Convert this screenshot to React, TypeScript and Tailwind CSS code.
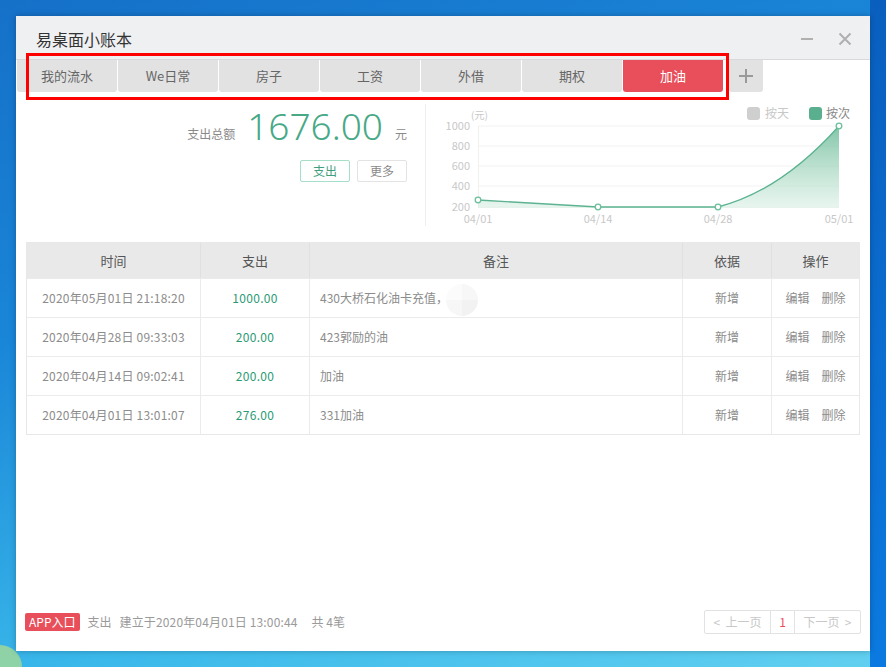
import React from 'react';

const tabs = ['我的流水', 'We日常', '房子', '工资', '外借', '期权', '加油'];

const rows = [
  { time: '2020年05月01日 21:18:20', amount: '1000.00', note: '430大桥石化油卡充值，', basis: '新增' },
  { time: '2020年04月28日 09:33:03', amount: '200.00', note: '423郭励的油', basis: '新增' },
  { time: '2020年04月14日 09:02:41', amount: '200.00', note: '加油', basis: '新增' },
  { time: '2020年04月01日 13:01:07', amount: '276.00', note: '331加油', basis: '新增' },
];

const font = { fontFamily: '"Noto Sans CJK SC", "Noto Sans", sans-serif' };

function Chart() {
  const yTicks = [
    { v: '1000', y: 127 },
    { v: '800', y: 147 },
    { v: '600', y: 167 },
    { v: '400', y: 187 },
    { v: '200', y: 208 },
  ];
  const xTicks = [
    { v: '04/01', x: 478 },
    { v: '04/14', x: 598 },
    { v: '04/28', x: 718 },
    { v: '05/01', x: 839 },
  ];
  const pts = [
    [478, 201],
    [598, 208],
    [718, 208],
    [839, 127],
  ];
  const line = 'M478,201 L598,208 L718,208 C765,196 805,165 839,127';
  return (
    <svg width="430" height="127" viewBox="426 100 430 127" className="block">
      <defs>
        <linearGradient id="area" x1="0" y1="0" x2="0" y2="1">
          <stop offset="0%" stopColor="#6dbb98" stopOpacity="0.85" />
          <stop offset="100%" stopColor="#d9f0e5" stopOpacity="0.6" />
        </linearGradient>
      </defs>
      {yTicks.map((t) => (
        <g key={t.v}>
          <line x1="478" x2="839" y1={t.y} y2={t.y} stroke="#f2f2f2" strokeWidth="1" />
          <text x="470" y={t.y + 4} textAnchor="end" fontSize="11" fill="#c8c8c8" style={font}>
            {t.v}
          </text>
        </g>
      ))}
      <line x1="478.5" x2="478.5" y1="127" y2="209" stroke="#f0f0f0" />
      <text x="471" y="120" fontSize="10" fill="#c8c8c8" style={font}>
        (元)
      </text>
      {xTicks.map((t) => (
        <text key={t.v} x={t.x} y="224" textAnchor="middle" fontSize="11" fill="#c8c8c8" style={font}>
          {t.v}
        </text>
      ))}
      <path d={line + ' L839,209 L478,209 Z'} fill="url(#area)" />
      <path d={line} fill="none" stroke="#5cb391" strokeWidth="1.3" />
      {pts.map(([x, y]) => (
        <circle key={x} cx={x} cy={y} r="2.8" fill="#fff" stroke="#6cbf9c" strokeWidth="1.3" />
      ))}
      <rect x="747" y="108" width="13" height="13" rx="3" fill="#cfcfcf" />
      <text x="765" y="119" fontSize="12" fill="#c8c8c8" style={font}>
        按天
      </text>
      <rect x="809" y="108" width="13" height="13" rx="3" fill="#5aaf8e" />
      <text x="826" y="119" fontSize="12" fill="#888" style={font}>
        按次
      </text>
    </svg>
  );
}

export default function App() {
  return (
    <div
      className="relative w-[886px] h-[667px] overflow-hidden bg-[linear-gradient(160deg,#1570c8_0%,#1a86d8_35%,#3ab8ea_70%,#62d0f0_100%)] pt-[16px] pl-[16px]"
      style={font}
    >
      <div className="absolute right-0 top-0 w-[16px] h-full bg-[linear-gradient(180deg,#0a5fbe,#0b7ae0)]" />
      <div className="absolute left-0 bottom-0 w-[22px] h-[22px] rounded-tr-full bg-[#b4e08a] opacity-70" />

      <div className="relative flex flex-col w-[854px] h-[635px] bg-white shadow-[0_0_6px_rgba(0,0,0,0.25)]">
        {/* title bar */}
        <div className="flex items-center h-[44px] bg-[#eff0f2] border-b border-[#d8d9dd] pl-[20px] pr-[18px] shrink-0">
          <div className="text-[16px] text-[#333] pt-[3px]">易桌面小账本</div>
          <div className="ml-auto flex items-center gap-[24px] pt-[3px]">
            <svg width="14" height="14" viewBox="0 0 14 14">
              <line x1="1" y1="7" x2="13" y2="7" stroke="#b0b0b0" strokeWidth="2" />
            </svg>
            <svg width="14" height="14" viewBox="0 0 14 14">
              <path d="M1.5 1.5 L12.5 12.5 M12.5 1.5 L1.5 12.5" stroke="#b0b0b0" strokeWidth="2" />
            </svg>
          </div>
        </div>

        {/* tabs */}
        <div className="flex gap-[1px] pl-[1px] h-[32px] shrink-0">
          {tabs.map((t) => (
            <div
              key={t}
              className={
                t === '加油'
                  ? 'w-[100px] flex items-center justify-center rounded-b-[3px] bg-[#e84f5a] text-white text-[13px]'
                  : 'w-[100px] flex items-center justify-center rounded-b-[3px] bg-[#e2e2e2] text-[#666] text-[13px]'
              }
            >
              {t}
            </div>
          ))}
          <div className="w-[34px] ml-[5px] flex items-center justify-center rounded-b-[3px] bg-[#e2e2e2]">
            <svg width="16" height="16" viewBox="0 0 16 16">
              <path d="M8 1 V15 M1 8 H15" stroke="#9a9a9a" strokeWidth="2" />
            </svg>
          </div>
        </div>

        {/* summary + chart */}
        <div className="flex h-[150px] shrink-0">
          <div className="w-[409px] flex flex-col items-end pr-[18px] pt-[12px]">
            <div className="flex items-end">
              <span className="text-[12px] text-[#8a8a8a] mb-[5px]">支出总额</span>
              <span
                className="text-[37px] leading-[44px] text-[#48a987] ml-[12px] mr-[12px]"
                style={{ fontFamily: '"Noto Sans", "Liberation Sans", sans-serif', fontWeight: 300 }}
              >
                1676.00
              </span>
              <span className="text-[12px] text-[#8a8a8a] mb-[5px]">元</span>
            </div>
            <div className="flex gap-[7px] mt-[12px]">
              <div className="w-[50px] h-[22px] flex items-center justify-center border border-[#a6dfc8] rounded-[2px] text-[12px] text-[#3f9e7c]">
                支出
              </div>
              <div className="w-[50px] h-[22px] flex items-center justify-center border border-[#e3e3e3] rounded-[2px] text-[12px] text-[#8a8a8a]">
                更多
              </div>
            </div>
          </div>
          <div className="w-[1px] bg-[#efefef] mt-[12px] h-[122px]" />
          <div className="pt-[7px]">
            <Chart />
          </div>
        </div>

        {/* table */}
        <div className="px-[10px]">
          <div className="border border-[#e8e8e8]">
            <div className="flex h-[35px] bg-[#e9e9e9] text-[13px] text-[#555]">
              <div className="w-[174px] flex items-center justify-center border-r border-[#e0e0e0]">时间</div>
              <div className="w-[109px] flex items-center justify-center border-r border-[#e0e0e0]">支出</div>
              <div className="w-[373px] flex items-center justify-center border-r border-[#e0e0e0]">备注</div>
              <div className="w-[89px] flex items-center justify-center border-r border-[#e0e0e0]">依据</div>
              <div className="flex-1 flex items-center justify-center">操作</div>
            </div>
            {rows.map((r, i) => (
              <div key={i} className="flex h-[39px] border-t border-[#ebebeb] text-[12px] text-[#8c8c8c]">
                <div className="w-[174px] flex items-center justify-center border-r border-[#ebebeb] tracking-[0.2px]">
                  {r.time}
                </div>
                <div className="w-[109px] flex items-center justify-center border-r border-[#ebebeb] text-[#2b9a74] tracking-[0.3px]">
                  {r.amount}
                </div>
                <div className="relative w-[373px] flex items-center pl-[10px] border-r border-[#ebebeb]">
                  {r.note}
                  {i === 0 && (
                    <div className="absolute left-[136px] top-[5px] w-[32px] h-[32px] rounded-full bg-[conic-gradient(#f7f7f7_0_25%,#f2f2f2_25%_50%,#f7f7f7_50%_75%,#fbfbfb_75%)]" />
                  )}
                </div>
                <div className="w-[89px] flex items-center justify-center border-r border-[#ebebeb]">{r.basis}</div>
                <div className="flex-1 flex items-center justify-center gap-[12px]">
                  <span>编辑</span>
                  <span>删除</span>
                </div>
              </div>
            ))}
          </div>
        </div>

        {/* footer */}
        <div className="mt-auto flex items-center justify-between pl-[9px] pr-[9px] pb-[17px]">
          <div className="flex items-center text-[12px] text-[#9a9a9a]">
            <span className="h-[18px] px-[4px] flex items-center bg-[#e84f5a] text-white rounded-[2px]">APP入口</span>
            <span className="ml-[8px]">支出</span>
            <span className="ml-[8px] tracking-[0.15px]">建立于2020年04月01日 13:00:44</span>
            <span className="ml-[14px]">共 4笔</span>
          </div>
          <div className="flex h-[24px] border border-[#e2e2e2] rounded-[2px] text-[12px] text-[#c8c8c8]">
            <div className="w-[65px] flex items-center justify-center">&lt;&nbsp;&nbsp;上一页</div>
            <div className="w-[25px] flex items-center justify-center border-l border-r border-[#e2e2e2] text-[#e84f5a]">1</div>
            <div className="flex-1 w-[65px] flex items-center justify-center">下一页&nbsp;&nbsp;&gt;</div>
          </div>
        </div>

        {/* annotation outline */}
        <div className="absolute left-[10px] top-[37px] w-[703px] h-[47px] border-[3px] border-[#ff0000] pointer-events-none" />
      </div>
    </div>
  );
}
